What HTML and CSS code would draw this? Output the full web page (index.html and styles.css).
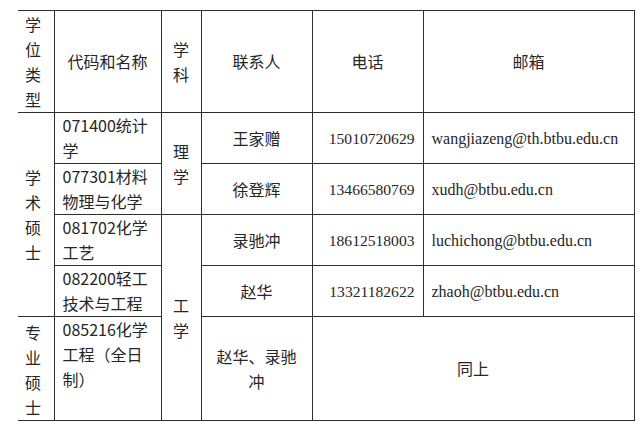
FILE: index.html
```html
<!DOCTYPE html>
<html lang="zh-CN">
<head>
<meta charset="utf-8">
<title>招生联系表</title>
<link rel="stylesheet" href="styles.css">
</head>
<body>
<table class="grid">
  <colgroup>
    <col class="c-type">
    <col class="c-code">
    <col class="c-subj">
    <col class="c-person">
    <col class="c-phone">
    <col class="c-mail">
  </colgroup>
  <tr class="r-head">
    <td class="type">学位类型</td>
    <td class="center">代码和名称</td>
    <td class="center">学科</td>
    <td class="center">联系人</td>
    <td class="center">电话</td>
    <td class="center">邮箱</td>
  </tr>
  <tr class="r-row">
    <td class="type" rowspan="4">学术硕士</td>
    <td class="code">071400统计学</td>
    <td class="center" rowspan="2">理学</td>
    <td class="center">王家赠</td>
    <td class="phone">15010720629</td>
    <td class="mail">wangjiazeng@th.btbu.edu.cn</td>
  </tr>
  <tr class="r-row">
    <td class="code">077301材料物理与化学</td>
    <td class="center">徐登辉</td>
    <td class="phone">13466580769</td>
    <td class="mail">xudh@btbu.edu.cn</td>
  </tr>
  <tr class="r-row">
    <td class="code">081702化学工艺</td>
    <td class="center" rowspan="3">工学</td>
    <td class="center">录驰冲</td>
    <td class="phone">18612518003</td>
    <td class="mail">luchichong@btbu.edu.cn</td>
  </tr>
  <tr class="r-row">
    <td class="code">082200轻工技术与工程</td>
    <td class="center">赵华</td>
    <td class="phone">13321182622</td>
    <td class="mail">zhaoh@btbu.edu.cn</td>
  </tr>
  <tr class="r-last">
    <td class="type type-low">专业硕士</td>
    <td class="code top">085216化学工程（全日制）</td>
    <td class="center person-wide">赵华、录驰冲</td>
    <td class="center" colspan="2">同上</td>
  </tr>
</table>
</body>
</html>
```
FILE: styles.css
```css
html, body {
  margin: 0;
  padding: 0;
  background: #ffffff;
}

body {
  padding: 10px 0 0 18px;
  font-family: "Noto Sans CJK SC", "Noto Sans", sans-serif;
  font-size: 16px;
  line-height: 25px;
  color: #262626;
}

.grid {
  border-collapse: collapse;
  table-layout: fixed;
  width: 616px;
}

.c-type { width: 36px; }
.c-code { width: 107px; }
.c-subj { width: 40px; }
.c-person { width: 111px; }
.c-phone { width: 111px; }
.c-mail { width: 211px; }

.grid td {
  border: 1px solid #2e2e2e;
  padding: 0 8px;
  vertical-align: middle;
  overflow: hidden;
}

.grid tr td:first-child.type {
  border-left: none;
}

.r-head { height: 102px; }
.r-row { height: 51px; }
.r-last { height: 102px; }

.type {
  text-align: left;
  padding: 0 6px 0 7px !important;
}

.type-low {
  padding-top: 3px !important;
}

.center {
  text-align: center;
}

.code {
  text-align: left;
}

.top {
  vertical-align: top !important;
}

.person-wide {
  padding: 0 10px !important;
}

.phone {
  text-align: right;
  font-family: "Liberation Serif", serif;
  font-size: 15.6px;
}

.mail {
  text-align: left;
  font-family: "Liberation Serif", serif;
  font-size: 16px;
}
```
